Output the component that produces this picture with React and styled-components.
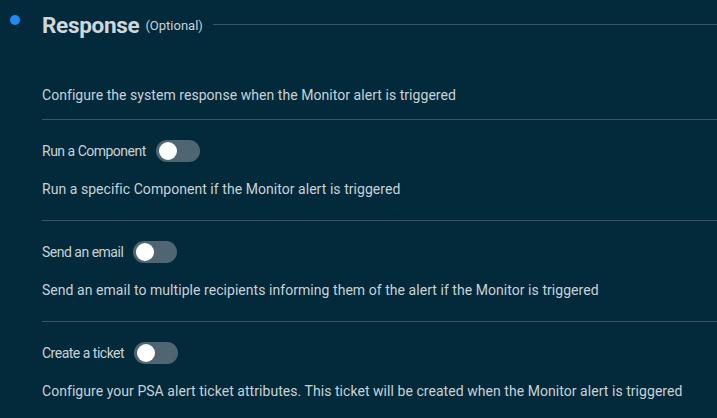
import React from 'react' ;
import styled, { createGlobalStyle } from 'styled-components' ;

const GlobalStyle = createGlobalStyle`
    html, body {
        margin : 0 ;
        padding : 0 ;
        background : #022a3b ;
    }
    body {
        font-family : Roboto, 'Liberation Sans', sans-serif ;
        color : #c8d1d6 ;
    }
`;

const Page = styled.div`
    width : 717px ;
    height : 418px ;
    overflow : hidden ;
    background : #022a3b ;
`;

const Header = styled.div`
    display : flex ;
    align-items : center ;
    height : 50px ;
`;

const Dot = styled.span`
    width : 10px ;
    height : 10px ;
    border-radius : 50% ;
    background : #1e8bf6 ;
    margin : 15px 22px 0 10px ;
    align-self : flex-start ;
`;

const Title = styled.h2`
    margin : 0 ;
    font-size : 22.5px ;
    font-weight : 700 ;
    color : #d0d6da ;
    letter-spacing : -0.3px ;
`;

const Optional = styled.span`
    font-size : 13px ;
    color : #c8d1d6 ;
    margin-left : 6px ;
`;

const HeaderLine = styled.div`
    flex : 1 ;
    height : 1px ;
    background : #3d5561 ;
    margin-left : 10px ;
    margin-top : -2px ;
`;

const Body = styled.div`
    margin-left : 42px ;
`;

const Intro = styled.p`
    margin : 0 ;
    padding : 36px 0 15px ;
    font-size : 14px ;
    line-height : 18px ;
    letter-spacing : 0.05px ;
    border-bottom : 1px solid #3d5561 ;
`;

const Section = styled.div`
    padding : 20px 0 22px ;
    border-bottom : ${props => props.last ? 'none' : '1px solid #3d5561'} ;
`;

const LabelRow = styled.div`
    display : flex ;
    align-items : center ;
    height : 22px ;
    gap : 10px ;
    font-size : 14px ;
    letter-spacing : -0.5px ;
`;

const Toggle = styled.span`
    position : relative ;
    width : 44px ;
    height : 22px ;
    border-radius : 11px ;
    background : #4f6672 ;

    &::after {
        content : '' ;
        position : absolute ;
        left : 3px ;
        top : 2px ;
        width : 18px ;
        height : 18px ;
        border-radius : 50% ;
        background : #ffffff ;
    }
`;

const Description = styled.p`
    margin : 18px 0 0 ;
    font-size : 14px ;
    line-height : 18px ;
    letter-spacing : 0.05px ;
`;

const responses = [
    { label : 'Run a Component', text : 'Run a specific Component if the Monitor alert is triggered' },
    { label : 'Send an email', text : 'Send an email to multiple recipients informing them of the alert if the Monitor is triggered' },
    { label : 'Create a ticket', text : 'Configure your PSA alert ticket attributes. This ticket will be created when the Monitor alert is triggered' },
];

const App = () => {
    return (
        <Page>
            <GlobalStyle />
            <Header>
                <Dot />
                <Title>Response</Title>
                <Optional>(Optional)</Optional>
                <HeaderLine />
            </Header>
            <Body>
                <Intro>Configure the system response when the Monitor alert is triggered</Intro>
                {responses.map((item, i) => (
                    <Section key={item.label} last={i === responses.length - 1}>
                        <LabelRow>
                            {item.label}
                            <Toggle />
                        </LabelRow>
                        <Description>{item.text}</Description>
                    </Section>
                ))}
            </Body>
        </Page>
    );
};

export default App ;
